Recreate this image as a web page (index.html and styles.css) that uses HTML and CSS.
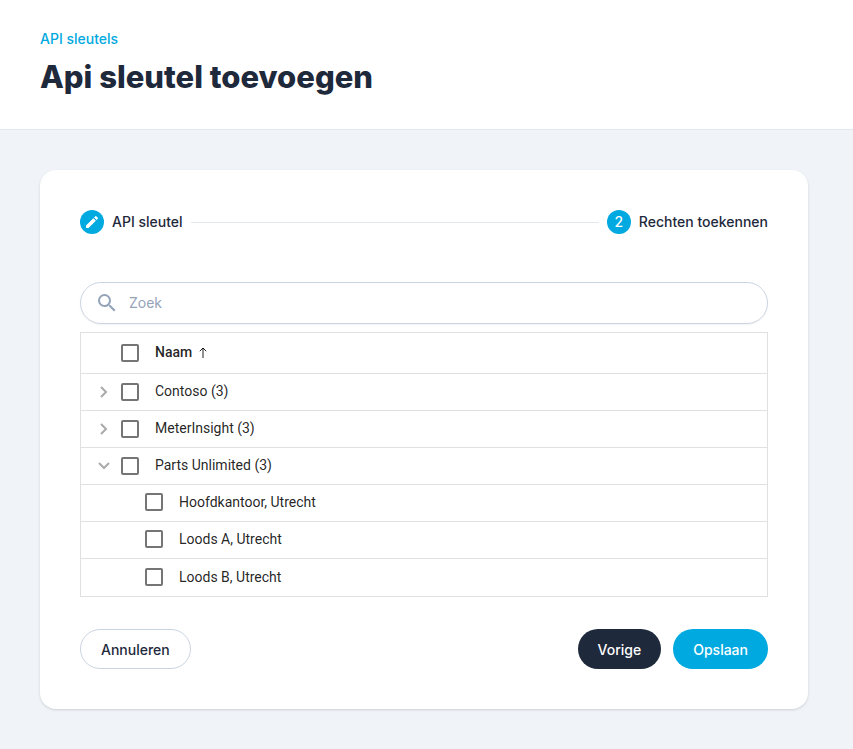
FILE: index.html
```html
<!DOCTYPE html>
<html lang="nl">
<head>
    <meta charset="UTF-8">
    <meta name="viewport" content="width=device-width, initial-scale=1.0">
    <title>Api sleutel toevoegen</title>
    <link rel="stylesheet" href="styles.css">
</head>
<body>
    <header class="page-header">
        <a class="breadcrumb" href="#">API sleutels</a>
        <h1>Api sleutel toevoegen</h1>
    </header>
    <main>
        <form class="card">
            <ol class="stepper">
                <li class="step">
                    <span class="step-icon">
                        <svg width="16" height="16" viewBox="0 0 24 24" fill="currentColor" aria-hidden="true"><path d="M3 17.25V21h3.75L17.81 9.94l-3.75-3.75L3 17.25zM20.71 7.04a1 1 0 0 0 0-1.41l-2.34-2.34a1 1 0 0 0-1.41 0l-1.83 1.83 3.75 3.75 1.83-1.83z"/></svg>
                    </span>
                    <span>API sleutel</span>
                </li>
                <li class="step-line" role="presentation"></li>
                <li class="step" aria-current="step">
                    <span class="step-icon">2</span>
                    <span>Rechten toekennen</span>
                </li>
            </ol>
            <div class="search">
                <svg width="24" height="24" viewBox="0 0 24 24" fill="currentColor" aria-hidden="true"><path d="M15.5 14h-.79l-.28-.27A6.47 6.47 0 0 0 16 9.5 6.5 6.5 0 1 0 9.5 16c1.61 0 3.09-.59 4.23-1.57l.27.28v.79l5 4.99L20.49 19l-4.99-5zm-6 0C7.01 14 5 11.99 5 9.5S7.01 5 9.5 5 14 7.01 14 9.5 11.99 14 9.5 14z"/></svg>
                <input type="text" placeholder="Zoek" aria-label="Zoek">
            </div>
            <table class="tree">
                <thead>
                    <tr>
                        <td class="toggle"></td>
                        <th aria-sort="ascending">
                            <label>
                                <input type="checkbox">
                                <span>Naam</span>
                                <svg class="sort" width="8" height="12" viewBox="0 0 8 12" fill="none" stroke="currentColor" aria-hidden="true"><path d="M4 11V1M.8 4.2L4 1l3.2 3.2"/></svg>
                            </label>
                        </th>
                    </tr>
                </thead>
                <tbody>
                    <tr>
                        <td class="toggle">
                            <button type="button" aria-label="Uitklappen"><svg width="12" height="12" viewBox="0 0 12 12" aria-hidden="true"><path d="M3 1l5 5-5 5"/></svg></button>
                        </td>
                        <td><label><input type="checkbox"><span>Contoso (3)</span></label></td>
                    </tr>
                    <tr>
                        <td class="toggle">
                            <button type="button" aria-label="Uitklappen"><svg width="12" height="12" viewBox="0 0 12 12" aria-hidden="true"><path d="M3 1l5 5-5 5"/></svg></button>
                        </td>
                        <td><label><input type="checkbox"><span>MeterInsight (3)</span></label></td>
                    </tr>
                    <tr>
                        <td class="toggle">
                            <button type="button" aria-label="Inklappen"><svg width="12" height="12" viewBox="0 0 12 12" aria-hidden="true"><path d="M1 3l5 5 5-5"/></svg></button>
                        </td>
                        <td><label><input type="checkbox"><span>Parts Unlimited (3)</span></label></td>
                    </tr>
                    <tr class="child">
                        <td class="toggle"></td>
                        <td><label><input type="checkbox"><span>Hoofdkantoor, Utrecht</span></label></td>
                    </tr>
                    <tr class="child">
                        <td class="toggle"></td>
                        <td><label><input type="checkbox"><span>Loods A, Utrecht</span></label></td>
                    </tr>
                    <tr class="child">
                        <td class="toggle"></td>
                        <td><label><input type="checkbox"><span>Loods B, Utrecht</span></label></td>
                    </tr>
                </tbody>
            </table>
            <div class="actions">
                <button type="button" class="btn btn-outline">Annuleren</button>
                <button type="button" class="btn btn-dark">Vorige</button>
                <button type="submit" class="btn btn-primary">Opslaan</button>
            </div>
        </form>
    </main>
</body>
</html>
```
FILE: styles.css
```css
* {
    box-sizing: border-box;
}
body {
    margin: 0;
    min-height: 100vh;
    background-color: #f0f4f9;
    color: #1e293b;
    font-family: Inter, sans-serif;
    font-size: 14px;
    line-height: 20px;
}
.page-header {
    padding: 29px 40px 32px;
    background: #fff;
    border-bottom: 1px solid #e2e8f0;
}
.breadcrumb {
    color: #00a9e0;
    font-weight: 500;
    text-decoration: none;
}
h1 {
    margin: 8px 0 0;
    font-size: 31px;
    font-weight: 800;
    line-height: 40px;
}
main {
    padding: 40px 45px 40px 40px;
}
.card {
    padding: 40px;
    background: #fff;
    border-radius: 16px;
    box-shadow: 0 1px 3px rgba(0,0,0,0.1), 0 1px 2px rgba(0,0,0,0.06);
}
.stepper {
    display: flex;
    align-items: center;
    gap: 8px;
    margin: 0 0 48px;
    padding: 0;
    list-style: none;
}
.step {
    display: flex;
    align-items: center;
    gap: 8px;
    color: #1e293b;
    font-weight: 500;
}
.step-icon {
    display: flex;
    align-items: center;
    justify-content: center;
    width: 24px;
    height: 24px;
    border-radius: 50%;
    background: #00a9e0;
    color: #fff;
}
.step-line {
    flex: 1;
    border-top: 1px solid #e2e8f0;
}
.search {
    display: flex;
    align-items: center;
    gap: 10px;
    height: 42px;
    margin-bottom: 8px;
    padding: 0 14px;
    border: 1px solid #cbd5e1;
    border-radius: 21px;
    box-shadow: 0 1px 2px rgba(0,0,0,0.05);
    color: #94a3b8;
}
.search input {
    flex: 1;
    min-width: 0;
    padding: 0;
    border: none;
    outline: none;
    background: none;
    color: #1e293b;
    font: inherit;
}
.search input::placeholder {
    color: #94a3b8;
}
.tree {
    width: 100%;
    border: 1px solid #e0e0e0;
    border-collapse: separate;
    border-spacing: 0;
    color: rgba(0,0,0,0.87);
    font-family: Roboto, sans-serif;
    font-weight: 400;
}
.tree td, .tree th {
    height: 37px;
    padding: 0;
    border-bottom: 1px solid #e0e0e0;
    text-align: left;
    vertical-align: middle;
}
.tree thead td, .tree thead th {
    height: 41px;
    font-weight: 500;
}
.tree tbody tr:last-child td {
    border-bottom: none;
}
.tree .toggle {
    width: 40px;
}
.toggle button {
    display: flex;
    margin-left: 17px;
    padding: 0;
    border: none;
    background: none;
    cursor: pointer;
}
.toggle path {
    fill: none;
    stroke: #aaa;
    stroke-width: 2;
}
.tree label {
    display: flex;
    align-items: center;
}
.tree label span {
    padding: 0 0 2px 16px;
}
.tree .child label {
    padding: 0 0 2px 24px;
}
.tree .child span {
    padding-bottom: 0;
}
.tree input {
    appearance: none;
    width: 18px;
    height: 18px;
    margin: 0;
    border: 2px solid #757575;
    border-radius: 2px;
    background: #fff;
}
.tree input:checked {
    background: #00a9e0;
    border-color: #00a9e0;
}
.sort {
    margin-left: 7px;
}
.actions {
    display: flex;
    gap: 12px;
    margin-top: 32px;
}
.btn {
    height: 40px;
    padding: 0 20px;
    border: none;
    border-radius: 20px;
    font-family: inherit;
    font-size: 14px;
    font-weight: 500;
    cursor: pointer;
}
.btn-outline {
    margin-right: auto;
    border: 1px solid #cbd5e1;
    background: #fff;
    color: #1e293b;
}
.btn-dark {
    background: #1e293b;
    color: #fff;
}
.btn-primary {
    background: #00a9e0;
    color: #fff;
}
```
